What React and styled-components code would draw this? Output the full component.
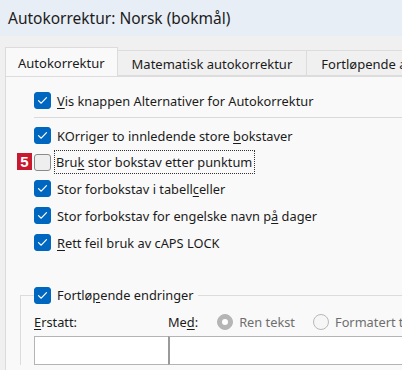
import React from "react";
import styled, { createGlobalStyle } from "styled-components";

const Global = createGlobalStyle`
  html, body {
    margin: 0;
    padding: 0;
    width: 402px;
    height: 370px;
    overflow: hidden;
    font-family: "Segoe UI", "Noto Sans", sans-serif;
    color: #1b1b1b;
  }
`;

const Window = styled.div`
  width: 402px;
  height: 370px;
  display: flex;
  flex-direction: column;
  background: #f0f0f0;
  overflow: hidden;
`;

const TitleBar = styled.div`
  height: 36px;
  flex: none;
  display: flex;
  align-items: center;
  padding-left: 8px;
  background: #e8eef6;
  font-size: 15.5px;
  color: #1c1c1c;
`;

const Body = styled.div`
  flex: 1;
  padding: 11px 0 0 5px;
  display: flex;
  flex-direction: column;
  min-width: 0;
`;

const TabStrip = styled.div`
  display: flex;
  align-items: flex-end;
  height: 29px;
  flex: none;
  overflow: hidden;
`;

const Tab = styled.div`
  height: ${(p) => (p.$active ? "30px" : "26px")};
  margin-bottom: ${(p) => (p.$active ? "-1px" : "0")};
  padding: 0 ${(p) => (p.$active ? "12px" : "14px")};
  display: flex;
  align-items: center;
  flex: none;
  box-sizing: border-box;
  font-size: 13px;
  background: ${(p) => (p.$active ? "#f9f9f9" : "#f0f0f0")};
  border: 1px solid #dcdcdc;
  border-bottom: ${(p) => (p.$active ? "none" : "1px solid #dcdcdc")};
  border-left: ${(p) => (p.$first ? "1px solid #dcdcdc" : "none")};
  position: relative;
  z-index: ${(p) => (p.$active ? 1 : 0)};
  white-space: nowrap;
  padding-top: ${(p) => (p.$active ? "0" : "1px")};
`;

const Panel = styled.div`
  flex: 1;
  background: #f9f9f9;
  border-top: 1px solid #dcdcdc;
  border-left: 1px solid #dcdcdc;
  padding: 10px 0 0 28px;
  display: flex;
  flex-direction: column;
  min-width: 0;
`;

const Row = styled.div`
  display: flex;
  align-items: center;
  height: ${(p) => p.$h || 27}px;
  gap: 6px;
  font-size: 12.8px;
  position: relative;
  white-space: nowrap;
`;

const Divider = styled.div`
  height: 1px;
  background: #dadada;
  margin: 3px 0 4px 0;
`;

const Box = styled.span`
  width: 17px;
  height: 17px;
  flex: none;
  box-sizing: border-box;
  border-radius: 3px;
  display: flex;
  align-items: center;
  justify-content: center;
  background: ${(p) => (p.$on ? "#0067c0" : "#eeeeee")};
  border: 1px solid ${(p) => (p.$on ? "#0067c0" : "#8a8a8a")};
`;

const Focus = styled.span`
  outline: 1px dotted #333;
  padding: 2px 2px 2px 1px;
  margin-left: -2px;
`;

const Badge = styled.span`
  position: absolute;
  left: -17px;
  top: 4px;
  width: 15px;
  height: 17px;
  background: #c8192f;
  color: #fff;
  font-family: "Liberation Sans", Arial, sans-serif;
  font-weight: 700;
  font-size: 15px;
  display: flex;
  align-items: center;
  justify-content: center;
`;

const Key = styled.span`
  text-decoration: underline;
  text-underline-offset: 2px;
`;

const Group = styled.fieldset`
  margin: 30px 0 0 -14px;
  padding: 0 0 0 13px;
  border: none;
  border-top: 1px solid #dcdcdc;
  border-left: 1px solid #dcdcdc;
  min-width: 0;
`;

const Legend = styled.legend`
  padding: 0 4px 0 0;
  display: flex;
  align-items: center;
  gap: 6px;
  font-size: 12.8px;
  height: 18px;
  white-space: nowrap;
`;

const FieldLabels = styled.div`
  display: grid;
  grid-template-columns: 134px auto;
  align-items: center;
  height: 26px;
  margin-top: 5px;
  font-size: 12.8px;
  white-space: nowrap;
`;

const Options = styled.div`
  display: flex;
  align-items: center;
  gap: 6px;
`;

const Radio = styled.span`
  width: 16px;
  height: 16px;
  box-sizing: border-box;
  border-radius: 50%;
  flex: none;
  display: flex;
  align-items: center;
  justify-content: center;
  background: ${(p) => (p.$on ? "#b5b5b5" : "#f6f6f6")};
  border: 1px solid ${(p) => (p.$on ? "#b5b5b5" : "#b8b8b8")};
  margin-left: ${(p) => p.$ml || 0}px;
  &::after {
    content: "";
    display: ${(p) => (p.$on ? "block" : "none")};
    width: 6px;
    height: 6px;
    border-radius: 50%;
    background: #fff;
  }
`;

const Dim = styled.span`
  color: #6e6e6e;
`;

const Inputs = styled.div`
  display: grid;
  grid-template-columns: 134px 1fr;
  height: 29px;
  margin-top: 1px;
`;

const Input = styled.div`
  background: #fff;
  box-sizing: border-box;
  border: 1px solid #b4b4b4;
  border-left: ${(p) => (p.$joined ? "2px solid #9a9a9a" : "1px solid #b4b4b4")};
  border-right: none;
`;

const Check = () => (
  <svg width="11" height="9" viewBox="0 0 11 9">
    <path d="M1.5 4.6 L4.2 7.2 L9.5 1.6" fill="none" stroke="#fff" strokeWidth="1.2" strokeLinecap="round" strokeLinejoin="round" />
  </svg>
);

const CheckBox = ({ on }) => <Box $on={on}>{on && <Check />}</Box>;

export default function App() {
  return (
    <Window>
      <Global />
      <TitleBar>Autokorrektur: Norsk (bokmål)</TitleBar>
      <Body>
        <TabStrip>
          <Tab $active $first>Autokorrektur</Tab>
          <Tab>Matematisk autokorrektur</Tab>
          <Tab>Fortløpende autokorrektur</Tab>
        </TabStrip>
        <Panel>
          <Row>
            <CheckBox on />
            <span><Key>V</Key>is knappen Alternativer for Autokorrektur</span>
          </Row>
          <Divider />
          <Row>
            <CheckBox on />
            <span>KOrriger to innledende store <Key>b</Key>okstaver</span>
          </Row>
          <Row $h={26}>
            <Badge>5</Badge>
            <CheckBox />
            <Focus>Bru<Key>k</Key> stor bokstav etter punktum</Focus>
          </Row>
          <Row>
            <CheckBox on />
            <span>Stor forbokstav i tabell<Key>c</Key>eller</span>
          </Row>
          <Row>
            <CheckBox on />
            <span>Stor forbokstav for engelske navn p<Key>å</Key> dager</span>
          </Row>
          <Row>
            <CheckBox on />
            <span><Key>R</Key>ett feil bruk av cAPS LOCK</span>
          </Row>
          <Group>
            <Legend>
              <CheckBox on />
              <span>Fortlø<Key>p</Key>ende endringer</span>
            </Legend>
            <FieldLabels>
              <span><Key>E</Key>rstatt:</span>
              <Options>
                <span>Me<Key>d</Key>:</span>
                <Radio $on $ml={13} />
                <Dim>Ren tekst</Dim>
                <Radio $ml={12} />
                <Dim>Formatert tekst</Dim>
              </Options>
            </FieldLabels>
            <Inputs>
              <Input />
              <Input $joined />
            </Inputs>
          </Group>
        </Panel>
      </Body>
    </Window>
  );
}
